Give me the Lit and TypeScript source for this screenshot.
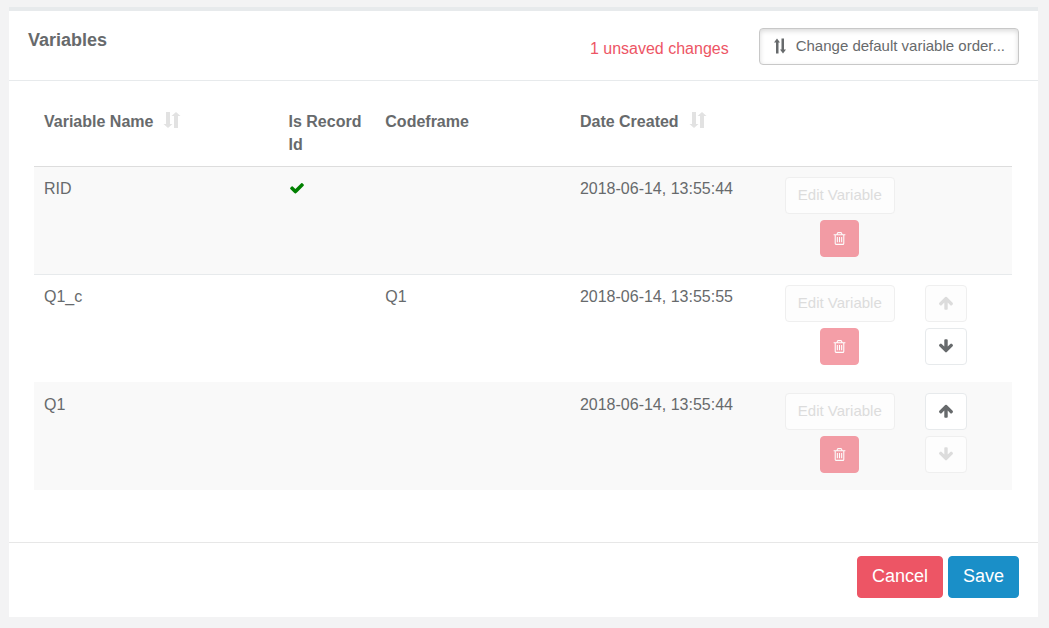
import { LitElement, html, css, svg, nothing } from "lit";
import { customElement, property, state } from "lit/decorators.js";

interface Variable {
  name: string;
  recordId: boolean;
  codeframe: string;
  created: string;
  movable: boolean;
}

const ICONS: Record<string, { box: string; path: string }> = {
  check: {
    box: "0 0 1792 1792",
    path: "M1671 566q0 40-28 68l-724 724-136 136q-28 28-68 28t-68-28l-136-136-362-362q-28-28-28-68t28-68l136-136q28-28 68-28t68 28l294 295 656-657q28-28 68-28t68 28l136 136q28 28 28 68z",
  },
  up: {
    box: "0 0 1792 1792",
    path: "M1675 971q0 51-37 90l-75 75q-38 38-91 38-54 0-90-38l-294-293v704q0 52-37.5 84.5t-90.5 32.5h-128q-53 0-90.5-32.5t-37.5-84.5v-704l-294 293q-36 38-90 38t-90-38l-75-75q-38-38-38-90 0-53 38-91l651-651q35-37 90-37 54 0 91 37l651 651q37 39 37 91z",
  },
  down: {
    box: "0 0 1792 1792",
    path: "M1675 832q0 53-37 90l-651 652q-39 37-91 37-53 0-90-37l-651-652q-38-36-38-90 0-53 38-91l74-75q39-37 91-37 53 0 90 37l294 294v-704q0-52 38-90t90-38h128q52 0 90 38t38 90v704l294-294q37-37 90-37 52 0 91 37l75 75q37 39 37 91z",
  },
  trash: {
    box: "0 0 1792 1792",
    path: "M704 736v576q0 14-9 23t-23 9h-64q-14 0-23-9t-9-23v-576q0-14 9-23t23-9h64q14 0 23 9t9 23zm256 0v576q0 14-9 23t-23 9h-64q-14 0-23-9t-9-23v-576q0-14 9-23t23-9h64q14 0 23 9t9 23zm256 0v576q0 14-9 23t-23 9h-64q-14 0-23-9t-9-23v-576q0-14 9-23t23-9h64q14 0 23 9t9 23zm128 724v-948h-896v948q0 22 7 40.5t14.5 27 10.5 8.5h832q3 0 10.5-8.5t14.5-27 7-40.5zm-672-1076h448l-48-117q-7-9-17-11h-317q-10 2-17 11zm928 32v64q0 14-9 23t-23 9h-96v948q0 83-47 143.5t-113 60.5h-832q-66 0-113-58.5t-47-141.5v-952h-96q-14 0-23-9t-9-23v-64q0-14 9-23t23-9h309l70-167q15-37 54-63t79-26h320q40 0 79 26t54 63l70 167h309q14 0 23 9t9 23z",
  },
  sort: {
    box: "0 0 16 16",
    path: "M2 0h4v12h2.500L4 16-.5 12H2zM10 16V4H7.500L12 0l4.500 4H14v12z",
  },
  order: {
    box: "0 0 16 16",
    path: "M4 15.500V4.500H2L5 .5l3 4H6.500v11zM9.500.5H12v11h2l-3 4-3-4h1.500z",
  },
};

@customElement("ui-icon")
export class UiIcon extends LitElement {
  @property() name = "check";

  static styles = css`
    :host {
      display: inline-block;
      width: 16px;
      height: 16px;
    }
    .glyph {
      display: block;
      width: 100%;
      height: 100%;
      fill: currentColor;
      overflow: visible;
    }
  `;

  render() {
    const icon = ICONS[this.name];
    return html`<svg class="glyph" viewBox=${icon.box} aria-hidden="true">
      ${svg`<path d=${icon.path}></path>`}
    </svg>`;
  }
}

@customElement("app-root")
export class AppRoot extends LitElement {
  @state() private variables: Variable[] = [
    { name: "RID", recordId: true, codeframe: "", created: "2018-06-14, 13:55:44", movable: false },
    { name: "Q1_c", recordId: false, codeframe: "Q1", created: "2018-06-14, 13:55:55", movable: true },
    { name: "Q1", recordId: false, codeframe: "", created: "2018-06-14, 13:55:44", movable: true },
  ];

  static styles = css`
    :host {
      display: block;
      box-sizing: border-box;
      min-height: 100vh;
      padding: 7px 11px 11px 9px;
      background: #f3f3f4;
      color: #676a6c;
      font: 16px/23px "Liberation Sans", Arial, sans-serif;
    }
    .panel {
      background: #fff;
      border-top: 4px solid #e7eaec;
    }
    .head {
      display: flex;
      align-items: flex-start;
      gap: 30px;
      padding: 17px 19px 15px;
      border-bottom: 1px solid #e7eaec;
    }
    .title {
      flex: 1;
      margin: 0;
      font-size: 18px;
      line-height: 25px;
      font-weight: 700;
    }
    .unsaved {
      padding-top: 9px;
      color: #ed5565;
    }
    .body {
      padding: 19px 26px 52px 25px;
    }
    .table {
      width: 100%;
      border-collapse: separate;
      border-spacing: 0;
      table-layout: fixed;
    }
    .w-name { width: 25%; }
    .w-record { width: 9.9%; }
    .w-wide { width: 19.9%; }
    .w-edit { width: 15.4%; }
    .w-move { width: 9.9%; }
    th, td {
      padding: 10px;
      text-align: left;
      vertical-align: top;
    }
    td {
      box-sizing: border-box;
      height: 108px;
      border-top: 1px solid #e7eaec;
    }
    .first td {
      border-top-color: #ddd;
    }
    .striped td {
      background: #f9f9f9;
    }
    .striped:not(.first) td {
      border-top-color: #f9f9f9;
    }
    .sort {
      display: inline-flex;
      align-items: flex-start;
      gap: 11px;
      padding: 0;
      border: 0;
      background: none;
      color: inherit;
      font: inherit;
      cursor: pointer;
    }
    .sort ui-icon {
      margin-top: 2px;
      color: #e2e2e2;
    }
    .check {
      color: green;
      vertical-align: top;
      margin-top: 3px;
    }
    .stack {
      display: flex;
      flex-direction: column;
      align-items: center;
      gap: 6px;
    }
    .stack.start {
      align-items: flex-start;
    }
    .btn {
      box-sizing: border-box;
      display: inline-flex;
      align-items: center;
      justify-content: center;
      height: 37px;
      padding: 0 12px 2px;
      border: 1px solid #e7eaec;
      border-radius: 4px;
      background: #fff;
      color: #676a6c;
      font: 15px/21px "Liberation Sans", Arial, sans-serif;
      white-space: nowrap;
      cursor: pointer;
    }
    .btn:disabled {
      cursor: not-allowed;
    }
    .edit:disabled, .move:disabled {
      border-color: #efefef;
      background: #fdfdfd;
      color: #dcdcdc;
    }
    .delete {
      padding: 0 11px;
      border-color: #ed5565;
      background: #ed5565;
      color: #fff;
    }
    .delete:disabled {
      opacity: 0.57;
    }
    .delete ui-icon {
      width: 15px;
      height: 15px;
    }
    .order {
      gap: 8px;
      padding: 0 13px 2px 12px;
      border-color: #c8c8c8;
      box-shadow: inset 0 2px 5px rgba(0, 0, 0, 0.15);
    }
    .foot {
      display: flex;
      justify-content: flex-end;
      gap: 5px;
      padding: 13px 19px 19px;
      border-top: 1px solid #e7e7e7;
    }
    .large {
      height: 42px;
      padding: 0 14px 2px;
      font-size: 18px;
      color: #fff;
    }
    .cancel {
      border-color: #ed5565;
      background: #ed5565;
    }
    .save {
      border-color: #1a8fc8;
      background: #1a8fc8;
    }
  `;

  private move(index: number, step: number) {
    const next = [...this.variables];
    [next[index], next[index + step]] = [next[index + step], next[index]];
    this.variables = next;
  }

  private renderRow(item: Variable, index: number) {
    const previous = this.variables[index - 1];
    return html`
      <tr class="${index % 2 ? "" : "striped"} ${index ? "" : "first"}">
        <td>${item.name}</td>
        <td>
          ${item.recordId
            ? html`<ui-icon class="check" name="check" role="img" aria-label="Yes"></ui-icon>`
            : nothing}
        </td>
        <td>${item.codeframe}</td>
        <td>${item.created}</td>
        <td>
          <div class="stack">
            <button class="btn edit" type="button" disabled>Edit Variable</button>
            <button class="btn delete" type="button" aria-label="Delete ${item.name}" disabled>
              <ui-icon name="trash"></ui-icon>
            </button>
          </div>
        </td>
        <td>
          ${item.movable
            ? html`<div class="stack start">
                <button class="btn move" type="button" aria-label="Move ${item.name} up"
                  ?disabled=${!previous?.movable} @click=${() => this.move(index, -1)}>
                  <ui-icon name="up"></ui-icon>
                </button>
                <button class="btn move" type="button" aria-label="Move ${item.name} down"
                  ?disabled=${index === this.variables.length - 1} @click=${() => this.move(index, 1)}>
                  <ui-icon name="down"></ui-icon>
                </button>
              </div>`
            : nothing}
        </td>
      </tr>
    `;
  }

  render() {
    return html`
      <main class="panel">
        <header class="head">
          <h1 class="title">Variables</h1>
          <span class="unsaved">1 unsaved changes</span>
          <button class="btn order" type="button">
            <ui-icon name="order"></ui-icon>Change default variable order...
          </button>
        </header>
        <div class="body">
          <table class="table">
            <colgroup>
              <col class="w-name" />
              <col class="w-record" />
              <col class="w-wide" />
              <col class="w-wide" />
              <col class="w-edit" />
              <col class="w-move" />
            </colgroup>
            <thead>
              <tr>
                <th scope="col">
                  <button class="sort" type="button">Variable Name<ui-icon name="sort"></ui-icon></button>
                </th>
                <th scope="col">Is Record Id</th>
                <th scope="col">Codeframe</th>
                <th scope="col">
                  <button class="sort" type="button">Date Created<ui-icon name="sort"></ui-icon></button>
                </th>
                <th></th>
                <th></th>
              </tr>
            </thead>
            <tbody>
              ${this.variables.map((item, index) => this.renderRow(item, index))}
            </tbody>
          </table>
        </div>
        <footer class="foot">
          <button class="btn large cancel" type="button">Cancel</button>
          <button class="btn large save" type="button">Save</button>
        </footer>
      </main>
    `;
  }
}
